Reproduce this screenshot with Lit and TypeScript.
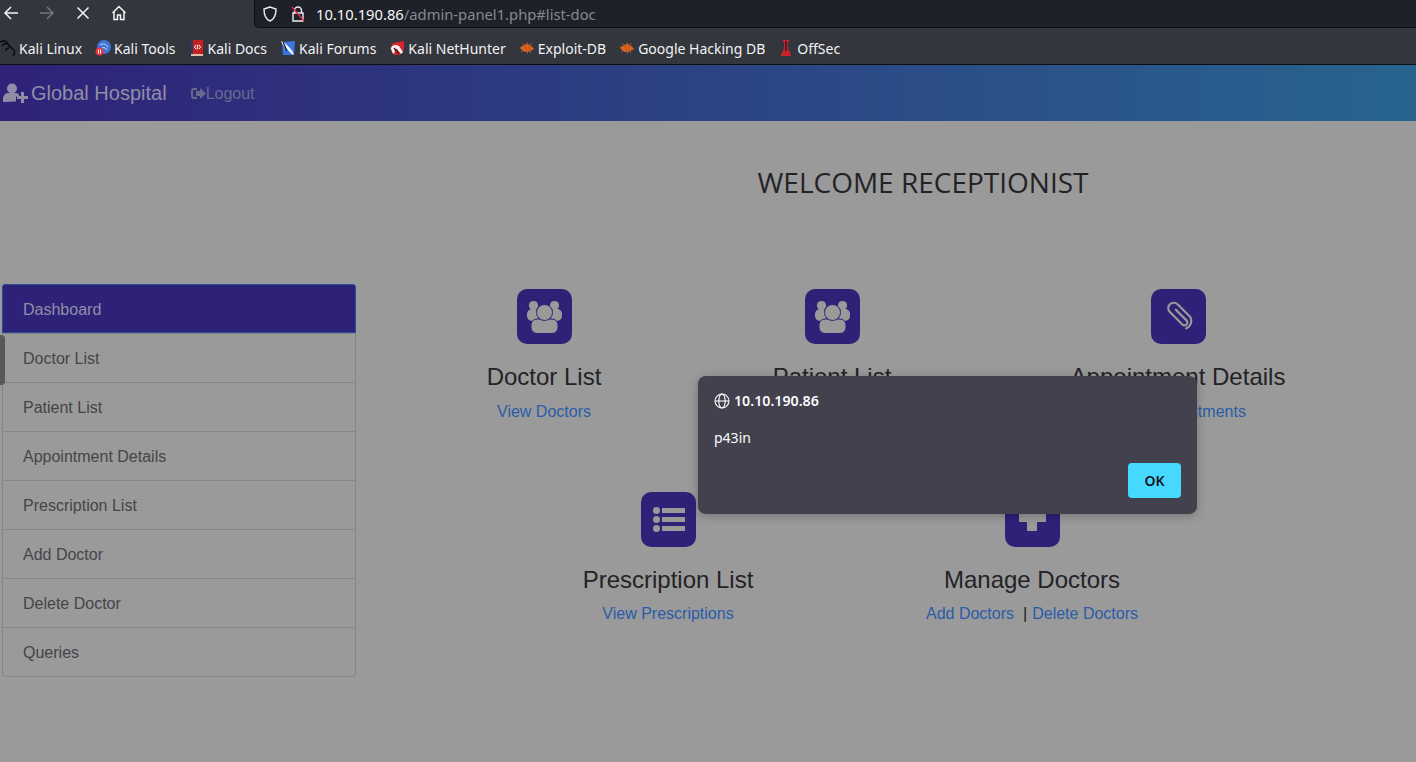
import { LitElement, css, html, svg } from "lit";
import { customElement } from "lit/decorators.js";

const bug = svg`
  <path d="M3 3l3 3M1 7h4M2 12l3-2M8 2l1 3M12 3l-1 3M8 14l1-3M12 13l-1-3" stroke="#8a5a3a" stroke-width="1"/>
  <path d="M1 8c2-1 3-3 6-4 3 0 6 2 8 5-3 2-5 3-8 3-2 0-4-2-6-4z" fill="#dc6420"/>
  <path d="M6 5l2 6M10 5l1 6" stroke="#a8481a" stroke-width=".7"/>`;

const bookmarks = [
  { label: "Kali Linux", icon: svg`<path d="M0 2c4-2 7-1 8 2s4 4 6 6c1 2 1 4-1 6M8 4c-3-1-5 0-6 2M9 8c-2 0-3 1-3 3" fill="none" stroke="#08080a" stroke-width="1.400"/>` },
  { label: "Kali Tools", icon: svg`<circle cx="9" cy="7" r="7" fill="#3f74d8"/><path d="M5 5c3-2 6-1 8 2M7 8c2-1 4 0 5 2" fill="none" stroke="#c9d8f5" stroke-width="1"/><circle cx="4.500" cy="11.500" r="4" fill="#e8343a"/><path d="M3.500 9.500v4M5.500 9.500v4" stroke="#fff" stroke-width="1"/>` },
  { label: "Kali Docs", icon: svg`<rect x="2" y="0" width="12" height="15" fill="#c4201c"/><rect x="2" y="0" width="2" height="15" fill="#2a3a6e"/><rect x="2" y="14" width="12" height="2" fill="#e6b9a8"/><path d="M7 5 5.500 7 7 9M10 5l1.500 2L10 9M9 4.500l-1 5" fill="none" stroke="#fff" stroke-width="1"/>` },
  { label: "Kali Forums", icon: svg`<path d="M2 2 15 1l-1 14-11 0z" fill="#3a78e0"/><path d="M1 1c3 1 5 3 7 5s5 5 6 9c-3-1-5-4-7-6S2 5 1 1z" fill="#f4f6fb"/><path d="M3 2 7 11" stroke="#1c1f2a" stroke-width="1.200"/>` },
  { label: "Kali NetHunter", icon: svg`<path d="M4 3 15 1v9l-4 5H5L1 8z" fill="#d8232a"/><path d="M2 9c0-4 5-5 8-3l4 6-2 2-4-5c-2-1-3 1-2 3l-2 2z" fill="#f3f3f3"/><path d="M5 8l5 6" stroke="#222" stroke-width="1.200"/>` },
  { label: "Exploit-DB", icon: bug },
  { label: "Google Hacking DB", icon: bug },
  { label: "OffSec", icon: svg`<path d="M5 0h6v2h-1v6l3 7v1H3v-1l3-7V2H5z" fill="#c9242b"/><path d="M7.300 1h1.400v10H7.300z" fill="#1a1a1d"/>` },
];

const menu = ["Doctor List", "Patient List", "Appointment Details", "Prescription List", "Add Doctor", "Delete Doctor", "Queries"];

const usersIcon = svg`
  <circle cx="16.500" cy="16.500" r="4.600"/><circle cx="37.500" cy="16.500" r="4.600"/>
  <rect x="10" y="20" width="12" height="12" rx="5"/><rect x="33" y="20" width="12" height="12" rx="5"/>
  <rect x="14" y="30" width="27" height="14.500" rx="6" class="cut"/>
  <circle cx="27.500" cy="23.500" r="8" class="cut"/>`;

const clipIcon = svg`
  <path transform="translate(27.500 27.500) rotate(-45) scale(.84)" d="M3.500 -8V10a3.500 3.500 0 0 1-7 0V-11a6.500 6.500 0 0 1 13 0V10.500a9.500 9.500 0 0 1-13 6" fill="none" stroke="#9a9a9b" stroke-width="2.600" stroke-linecap="round"/>`;

const listIcon = svg`
  <circle cx="15.500" cy="18.500" r="3.500"/><circle cx="15.500" cy="27.500" r="3.500"/><circle cx="15.500" cy="36.500" r="3.500"/>
  <rect x="21" y="16" width="23" height="5"/><rect x="21" y="25" width="23" height="5"/><rect x="21" y="34" width="23" height="5"/>`;

const plusIcon = svg`<path d="M22 13h10v8h8a1 1 0 0 1 1 1v8h-9v8a1 1 0 0 1-1 1h-8a1 1 0 0 1-1-1v-8h-8v-8a1 1 0 0 1 1-1h7z"/>`;

@customElement("app-root")
export class AppRoot extends LitElement {
  static styles = css`
    :host {
      display: block;
      position: relative;
      width: 1416px;
      height: 762px;
      overflow: hidden;
      background: #9a9a9b;
      font-family: "Liberation Sans", Arial, sans-serif;
    }

    /* browser chrome */
    .toolbar {
      height: 28px;
      background: #33363d;
      display: flex;
    }
    .nav-buttons {
      width: 254px;
      position: relative;
    }
    .nav-buttons svg {
      position: absolute;
      top: 5px;
      width: 16px;
      height: 16px;
      fill: none;
      stroke: #f4f4f6;
      stroke-width: 1.500;
    }
    .nav-buttons .back { left: 3px; }
    .nav-buttons .forward { left: 39px; stroke: #74777d; }
    .nav-buttons .stop { left: 75px; }
    .nav-buttons .home { left: 111px; }
    .urlbar {
      flex: 1;
      background: #1f2128;
      border-left: 1px solid #0e0f12;
      border-bottom: 1px solid #0e0f12;
      border-bottom-left-radius: 5px;
      display: flex;
      align-items: center;
      padding-left: 7px;
      font-family: "Noto Sans", sans-serif;
      font-size: 14.75px;
      color: #f6f6f8;
    }
    .urlbar svg {
      width: 16px;
      height: 16px;
      flex: none;
      fill: none;
      stroke: #eeeef0;
      stroke-width: 1.400;
    }
    .urlbar .lock { margin: 0 10px 0 12px; }
    .urlbar span { color: #858a92; }

    .bookmarks {
      height: 37px;
      box-sizing: border-box;
      padding-top: 4px;
      background: #33363d;
      border-bottom: 1px solid #0d0e11;
      display: flex;
      align-items: center;
      gap: 13px;
      font-family: "Noto Sans", sans-serif;
      font-size: 14px;
      color: #f2f2f4;
    }
    .bookmark {
      display: flex;
      align-items: center;
      gap: 3px;
      white-space: nowrap;
    }
    .bookmark svg { width: 16px; height: 16px; flex: none; }

    /* site header */
    .navbar {
      height: 56px;
      background: linear-gradient(90deg, #2f2279, #28648f);
      display: flex;
      align-items: center;
      padding-left: 3px;
    }
    .brand {
      display: flex;
      align-items: center;
      gap: 3px;
      font-size: 20px;
      color: #908ea6;
    }
    .brand svg { width: 25px; height: 20px; fill: #908ea6; }
    .logout {
      display: flex;
      align-items: center;
      margin: 1px 0 0 24px;
      font-size: 16px;
      color: #67698f;
    }
    .logout svg { width: 15px; height: 13px; fill: #67698f; }

    /* page */
    h1 {
      margin: 0;
      padding: 43px 0 0 0;
      text-align: center;
      width: 1846px;
      height: 119px;
      box-sizing: border-box;
      font-family: "Open Sans", sans-serif;
      font-weight: 400;
      font-size: 28px;
      line-height: 36px;
      color: #232326;
    }
    .main {
      display: flex;
      padding: 44px 0 0 2px;
    }
    .side {
      width: 354px;
      flex: none;
      border: 1px solid #868687;
      border-radius: 4px;
      box-sizing: border-box;
      font-size: 16px;
      color: #454547;
    }
    .side div {
      height: 49px;
      box-sizing: border-box;
      line-height: 50px;
      padding-left: 20px;
      border-top: 1px solid #868687;
    }
    .side .active {
      margin: -1px -1px 0;
      background: #2e2278;
      border: 1px solid #2a4c9c;
      border-radius: 3px 3px 0 0;
      color: #908ea6;
    }
    .cards { flex: 1; padding-top: 5px; }
    .row-top {
      display: grid;
      grid-template-columns: 288px 288px 404px;
      padding-left: 44px;
    }
    .row-bottom {
      display: grid;
      grid-template-columns: 220px 220px;
      column-gap: 144px;
      padding: 69px 0 0 202px;
    }
    .row-bottom .links { margin-top: 9px; }
    .card {
      display: flex;
      flex-direction: column;
      align-items: center;
      white-space: nowrap;
    }
    .tile {
      width: 55px;
      height: 55px;
      border-radius: 10px;
      background: #2e2278;
    }
    .tile svg { display: block; width: 55px; height: 55px; fill: #9a9a9b; }
    .tile .cut { stroke: #2e2278; stroke-width: 1; }
    h2 {
      margin: 19px 0 0;
      font-weight: 400;
      font-size: 24px;
      line-height: 28px;
      color: #232326;
    }
    .links {
      margin-top: 10px;
      font-size: 16px;
      line-height: 22px;
      color: #1a1a1c;
    }
    a { color: #2a5ca8; text-decoration: none; }
    .sep { margin: 0 5px 0 9px; }

    /* over the page */
    .handle {
      position: absolute;
      left: 0;
      top: 335px;
      width: 5px;
      height: 50px;
      box-sizing: border-box;
      background: #58585a;
      border-radius: 0 4px 4px 0;
    }
    .dialog {
      position: absolute;
      left: 698px;
      top: 376px;
      width: 499px;
      height: 138px;
      box-sizing: border-box;
      padding: 16px 16px 0;
      background: #42414d;
      border-radius: 8px;
      box-shadow: 0 2px 10px rgba(0, 0, 0, 0.25);
      font-family: "Noto Sans", sans-serif;
      color: #fbfbfe;
    }
    .origin {
      display: flex;
      align-items: center;
      gap: 4px;
      font-size: 14.2px;
      line-height: 18px;
      font-weight: 600;
    }
    .origin svg { width: 16px; height: 16px; fill: none; stroke: #fbfbfe; stroke-width: 1.100; }
    .message { margin-top: 19px; font-size: 14px; line-height: 18px; }
    .actions { display: flex; justify-content: flex-end; margin-top: 16px; }
    button {
      width: 53px;
      height: 35px;
      padding: 0;
      border: 0;
      border-radius: 4px;
      background: #45d9ff;
      color: #15141a;
      font-family: "Noto Sans", sans-serif;
      font-size: 14px;
      font-weight: 600;
    }
  `;

  private tile(icon: unknown) {
    return html`<div class="tile"><svg viewBox="0 0 55 55">${icon}</svg></div>`;
  }

  protected render() {
    return html`
      <div class="toolbar">
        <div class="nav-buttons">
          <svg class="back" viewBox="0 0 16 16"><path d="M15 8H2M8 2 2 8l6 6"/></svg>
          <svg class="forward" viewBox="0 0 16 16"><path d="M1 8h13M8 2l6 6-6 6"/></svg>
          <svg class="stop" viewBox="0 0 16 16"><path d="M2.500 2.500l11 11M13.500 2.500l-11 11"/></svg>
          <svg class="home" viewBox="0 0 16 16"><path d="M1.500 8 8 1.500 14.500 8M3 7v7.500h3.500V10h3v4.500H13V7"/></svg>
        </div>
        <div class="urlbar">
          <svg viewBox="0 0 16 16"><path d="M8 1 2 3c0 6 1 10 6 12 5-2 6-6 6-12z"/></svg>
          <svg class="lock" viewBox="0 0 16 16">
            <path d="M4.500 7V4.500a3.500 3.500 0 0 1 7 0V7M3 7h10v8H3z"/>
            <path d="M2 1l12 14" stroke="#e22850"/>
          </svg>
          10.10.190.86<span>/admin-panel1.php#list-doc</span>
        </div>
      </div>
      <div class="bookmarks">
        ${bookmarks.map((b) => html`
          <div class="bookmark"><svg viewBox="0 0 16 16">${b.icon}</svg>${b.label}</div>
        `)}
      </div>

      <div class="navbar">
        <div class="brand">
          <svg viewBox="0 0 25 20"><circle cx="9" cy="5.500" r="5"/><path d="M0 19v-3c0-4 3-6 5-6h8c1 0 2 .5 3 1.500v2h-3v5z"/><path d="M18 9h3v4h4v3h-4v4h-3v-4h-4v-3h4z"/></svg>
          Global Hospital
        </div>
        <div class="logout">
          <svg viewBox="0 0 15 13"><path d="M6 1H3a3 3 0 0 0-3 3v5a3 3 0 0 0 3 3h3v-2H3a1 1 0 0 1-1-1V4a1 1 0 0 1 1-1h3z"/><path d="M9 1l6 5.500L9 12V9H5V4h4z"/></svg>
          Logout
        </div>
      </div>

      <h1>WELCOME RECEPTIONIST</h1>

      <div class="main">
        <div class="side">
          <div class="active">Dashboard</div>
          ${menu.map((m) => html`<div>${m}</div>`)}
        </div>
        <div class="cards">
          <div class="row-top">
            <div class="card">
              ${this.tile(usersIcon)}
              <h2>Doctor List</h2>
              <div class="links"><a href="#">View Doctors</a></div>
            </div>
            <div class="card">
              ${this.tile(usersIcon)}
              <h2>Patient List</h2>
              <div class="links"><a href="#">View Patients</a></div>
            </div>
            <div class="card">
              ${this.tile(clipIcon)}
              <h2>Appointment Details</h2>
              <div class="links"><a href="#">View Appointments</a></div>
            </div>
          </div>
          <div class="row-bottom">
            <div class="card">
              ${this.tile(listIcon)}
              <h2>Prescription List</h2>
              <div class="links"><a href="#">View Prescriptions</a></div>
            </div>
            <div class="card">
              ${this.tile(plusIcon)}
              <h2>Manage Doctors</h2>
              <div class="links"><a href="#">Add Doctors</a><span class="sep">|</span><a href="#">Delete Doctors</a></div>
            </div>
          </div>
        </div>
      </div>

      <div class="handle"></div>
      <div class="dialog">
        <div class="origin">
          <svg viewBox="0 0 16 16"><circle cx="8" cy="8" r="7"/><ellipse cx="8" cy="8" rx="3.200" ry="7"/><path d="M1 8h14"/></svg>
          10.10.190.86
        </div>
        <div class="message">p43in</div>
        <div class="actions"><button>OK</button></div>
      </div>
    `;
  }
}
